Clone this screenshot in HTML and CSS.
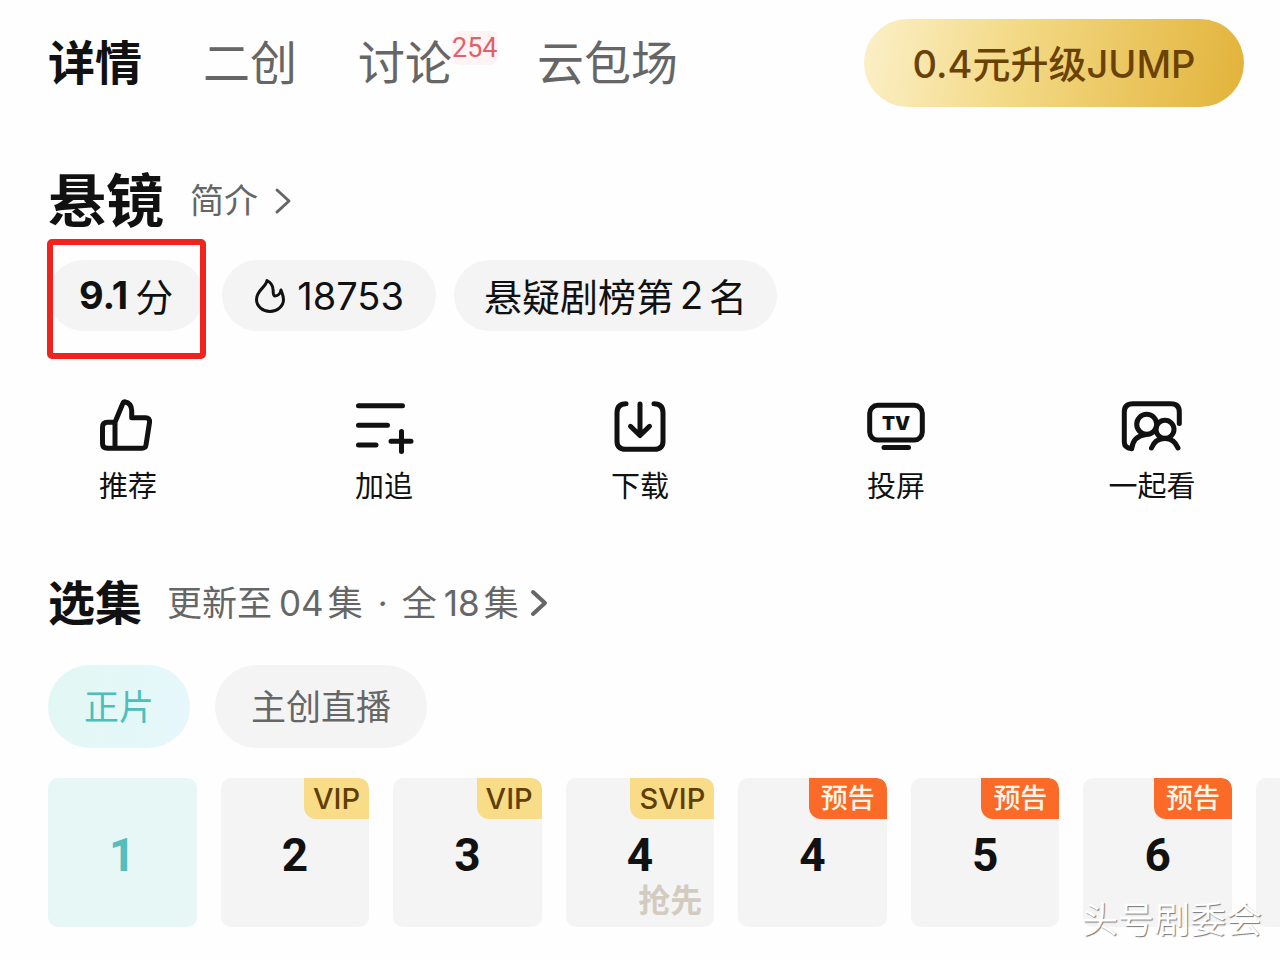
FILE: index.html
```html
<!DOCTYPE html>
<html lang="zh-CN">
<head>
    <meta charset="UTF-8">
    <meta name="viewport" content="width=device-width, initial-scale=1.0">
    <title>悬镜</title>
    <link rel="stylesheet" href="styles.css">
</head>
<body>
    <header class="header">
        <nav class="tabs">
            <a href="#" class="tab active">详情</a>
            <a href="#" class="tab">二创</a>
            <a href="#" class="tab">讨论<span class="count">254</span></a>
            <a href="#" class="tab">云包场</a>
        </nav>
        <button class="upgrade">0.4元升级JUMP</button>
    </header>

    <main>
        <div class="title-row">
            <h1>悬镜</h1>
            <a href="#" class="intro">简介
                <svg class="arrow" viewBox="0 0 18 28"><path d="M3 3L15 14L3 25"/></svg>
            </a>
        </div>

        <div class="chips">
            <span class="chip score"><b>9.1</b>分</span>
            <span class="chip hot">
                <svg class="flame" viewBox="0 0 32 36"><path d="M13 2.500C12 9.500 2.500 12 2.500 21.500C2.500 28.500 9 33.500 16 33.500C23 33.500 29.500 28.500 29.500 21.500C29.500 17.500 28 15 27 12C26.500 15.500 24 18 21 18C18.500 17.500 19.500 14 19 11C18.500 7 16 4 13 2.500Z"/></svg>18753
            </span>
            <a href="#" class="chip rank">悬疑剧榜第<span>2</span>名</a>
        </div>

        <div class="actions">
            <button class="action">
                <svg viewBox="0 0 64 64">
                    <path d="M19 26.300H11.500Q6.500 26.300 6.500 31.300V47.300Q6.500 52.300 11.500 52.300H46Q49.500 52.300 50 49L53.500 26.500Q54 21.700 49.500 21.700H35.700V14.500Q35.500 7 28.500 5.700Q27.500 5.700 27 7L19 26.300V52.300"/>
                </svg>
                推荐
            </button>
            <button class="action">
                <svg viewBox="0 0 64 64">
                    <path d="M6.500 9.700H50.500M6.500 29.300H35.500M6.500 49H24M39 45.300H59M49.500 35.500V55.500"/>
                </svg>
                加追
            </button>
            <button class="action">
                <svg viewBox="0 0 64 64">
                    <path d="M18 7.700Q9 7.700 9 17V45Q9 53.300 17.500 53.300H46.500Q55 53.300 55 45V17Q55 7.700 46 7.700M32 8V39M22.500 30.300L32 39.500L41.500 30.300"/>
                </svg>
                下载
            </button>
            <button class="action">
                <svg viewBox="0 0 64 64">
                    <rect x="5.700" y="9.300" width="52.600" height="34.700" rx="8"/>
                    <path d="M20 51.500H44.500"/>
                    <text x="32" y="34">TV</text>
                </svg>
                投屏
            </button>
            <button class="action">
                <svg viewBox="0 0 64 64">
                    <path d="M59.300 27.500V16Q59.300 7.700 51 7.700H13Q4.300 7.700 4.300 16V46Q4.300 52 11.700 52.800Q13 40 26 38.500M31.500 52Q35 42.500 45 42.500Q54 42.500 58 52"/>
                    <circle cx="26.700" cy="28.300" r="10"/>
                    <circle cx="45" cy="33.300" r="9"/>
                </svg>
                一起看
            </button>
        </div>

        <div class="section-head">
            <h2>选集</h2>
            <a href="#" class="update">更新至<span>04</span>集<i>·</i>全<span>18</span>集
                <svg class="arrow" viewBox="0 0 18 28"><path d="M3 3L15 14L3 25"/></svg>
            </a>
        </div>

        <div class="filters">
            <button class="filter active">正片</button>
            <button class="filter">主创直播</button>
        </div>

        <div class="episodes">
            <button class="episode active">1</button>
            <button class="episode">2<span class="badge vip">VIP</span></button>
            <button class="episode">3<span class="badge vip">VIP</span></button>
            <button class="episode">4<span class="badge vip">SVIP</span><span class="early">抢先</span></button>
            <button class="episode">4<span class="badge preview">预告</span></button>
            <button class="episode">5<span class="badge preview">预告</span></button>
            <button class="episode">6<span class="badge preview">预告</span></button>
            <button class="episode" aria-label="7"></button>
        </div>
    </main>

    <div class="watermark">头号剧委会</div>
</body>
</html>
```
FILE: styles.css
```css
* {
    box-sizing: border-box;
}
body {
    position: relative;
    margin: 0;
    min-height: 100vh;
    overflow-x: hidden;
    background-color: #fefefe;
    color: #111;
    font-family: Inter, "Noto Sans CJK SC", sans-serif;
}
a {
    color: inherit;
    text-decoration: none;
}
button {
    padding: 0;
    border: none;
    background: none;
    color: inherit;
    font-family: inherit;
    cursor: pointer;
}
svg {
    fill: none;
    stroke: currentColor;
    stroke-linecap: round;
    stroke-linejoin: round;
}
h1, h2 {
    margin: 0;
    font-weight: bold;
    line-height: 60px;
}

/* 顶部导航 */
.header {
    display: flex;
    justify-content: space-between;
    align-items: center;
    padding: 19px 36px 0 48px;
}
.tabs {
    display: flex;
    gap: 61px;
}
.tab {
    position: relative;
    color: #666;
    font-size: 47px;
    line-height: 60px;
}
.tab.active {
    color: #111;
    font-weight: bold;
}
.tab:nth-child(3) {
    margin-right: 24px;
}
.count {
    position: absolute;
    top: -2px;
    left: 100%;
    border-radius: 8px;
    background-color: #fff4f3;
    color: #e26068;
    font-family: Roboto, sans-serif;
    font-size: 27px;
    line-height: 34px;
}
.upgrade {
    width: 380px;
    height: 88px;
    padding-bottom: 4px;
    border-radius: 44px;
    background: linear-gradient(100deg, #fbf0c8, #f3d985 40%, #e2b33a);
    color: #6b4206;
    font-size: 38px;
    font-weight: 500;
}

/* 标题 */
.title-row, .section-head {
    display: flex;
    align-items: center;
    padding-left: 48px;
}
.title-row {
    gap: 26px;
    margin-top: 64px;
}
h1 {
    font-size: 58px;
}
.intro, .update {
    display: flex;
    align-items: center;
    color: #666;
    font-size: 34px;
    line-height: 60px;
}
.arrow {
    width: 18px;
    height: 28px;
    stroke-width: 3;
}
.intro .arrow {
    margin-left: 16px;
}
.chips {
    display: flex;
    gap: 18px;
    margin-top: 29px;
    padding-left: 48px;
}
.chip {
    position: relative;
    display: flex;
    align-items: center;
    height: 71px;
    padding: 0 31px 2px;
    border-radius: 36px;
    background-color: #f4f4f4;
    font-size: 38px;
}
.chip b {
    margin-right: 7px;
}
.hot {
    padding: 0 32px;
}
.flame {
    width: 32px;
    height: 36px;
    margin-right: 11px;
    stroke-width: 3;
}
.rank {
    padding: 0 30px 2px;
}
.rank span {
    margin: 0 6px;
}
/* 红框标记 */
.score::after {
    content: "";
    position: absolute;
    inset: -21px -2px -28px -1px;
    border: 6px solid #f0241c;
    border-radius: 5px;
}

/* 操作按钮 */
.actions {
    display: grid;
    grid-template-columns: repeat(5, 1fr);
    margin-top: 65px;
}
.action {
    display: flex;
    flex-direction: column;
    align-items: center;
    gap: 7px;
    font-size: 29px;
    line-height: 40px;
}
.action svg {
    width: 64px;
    height: 64px;
    stroke-width: 5;
}
.action text {
    fill: currentColor;
    stroke: none;
    font-size: 19px;
    font-weight: 900;
    text-anchor: middle;
}

/* 选集 */
.section-head {
    gap: 25px;
    margin-top: 66px;
}
h2 {
    font-size: 47px;
}
.update {
    font-size: 35px;
}
.update span {
    margin: 0 4px 0 7px;
}
.update i {
    width: 39px;
    text-align: center;
}
.update .arrow {
    margin-left: 11px;
    stroke-width: 4;
}
.filters {
    display: flex;
    gap: 25px;
    margin-top: 32px;
    padding-left: 48px;
}
.filter {
    height: 83px;
    padding: 0 36px 4px;
    border-radius: 42px;
    background-color: #f4f4f4;
    color: #666;
    font-size: 35px;
}
.filter.active {
    background: linear-gradient(100deg, #e2f8f4, #e6f7fb);
    color: #4cbfbb;
}
.episodes {
    display: grid;
    grid-auto-flow: column;
    grid-auto-columns: calc((100% - 192px) / 7);
    gap: 24px;
    margin: 30px 0 0 48px;
    overflow: hidden;
}
.episode {
    position: relative;
    aspect-ratio: 1;
    padding-top: 5px;
    border-radius: 10px;
    background-color: #f4f4f4;
    font-family: Roboto, sans-serif;
    font-size: 46px;
    font-weight: bold;
    overflow: hidden;
}
.episode.active {
    background-color: #e6f7f6;
    color: #55bdbb;
}
.badge {
    position: absolute;
    top: 0;
    right: 0;
    height: 41px;
    border-radius: 0 10px 0 12px;
    font-family: Inter, "Noto Sans CJK SC", sans-serif;
    line-height: 42px;
}
.vip {
    padding: 0 9px;
    background-color: #f9dc88;
    color: #5f3f05;
    font-size: 29px;
    font-weight: 500;
}
.preview {
    padding: 0 12px;
    background-color: #fb6a26;
    color: #fff6e8;
    font-size: 27px;
    font-weight: 500;
}
.early {
    position: absolute;
    right: 12px;
    bottom: 9px;
    color: #d3cbc0;
    font-family: "Noto Sans CJK SC", sans-serif;
    font-size: 32px;
    line-height: 40px;
}

.watermark {
    position: absolute;
    right: 18px;
    bottom: 17px;
    color: #fff;
    font-size: 36px;
    line-height: 46px;
    text-shadow: 1px 1px 1px #777;
}
```
